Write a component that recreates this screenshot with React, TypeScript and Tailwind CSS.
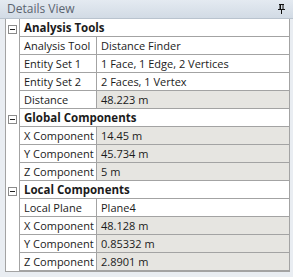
import React from "react";

type Row = { label: string; value: string; readOnly?: boolean };
type Group = { title: string; rows: Row[] };

const groups: Group[] = [
  {
    title: "Analysis Tools",
    rows: [
      { label: "Analysis Tool", value: "Distance Finder" },
      { label: "Entity Set 1", value: "1 Face, 1 Edge, 2 Vertices" },
      { label: "Entity Set 2", value: "2 Faces, 1 Vertex" },
      { label: "Distance", value: "48.223 m", readOnly: true },
    ],
  },
  {
    title: "Global Components",
    rows: [
      { label: "X Component", value: "14.45 m", readOnly: true },
      { label: "Y Component", value: "45.734 m", readOnly: true },
      { label: "Z Component", value: "5 m", readOnly: true },
    ],
  },
  {
    title: "Local Components",
    rows: [
      { label: "Local Plane", value: "Plane4" },
      { label: "X Component", value: "48.128 m", readOnly: true },
      { label: "Y Component", value: "0.85332 m", readOnly: true },
      { label: "Z Component", value: "2.8901 m", readOnly: true },
    ],
  },
];

const PinIcon = () => (
  <svg width="7" height="10" viewBox="0 0 7 10" className="block">
    <path d="M1 0.5h5M2 0.5v5M5 0.5v5M0 5.5h7M3.5 5.5v4.5" stroke="#111" strokeWidth="1" fill="none" />
    <rect x="2" y="1" width="1" height="4" fill="#111" />
  </svg>
);

const MinusBox = () => (
  <div className="w-[9px] h-[9px] border border-[#8b8b8b] bg-white flex items-center justify-center">
    <div className="w-[5px] h-px bg-[#222]" />
  </div>
);

const App = () => {
  return (
    <div
      className="w-[293px] h-[277px] bg-[#e9edf2] overflow-hidden text-[11px] text-[#1b1b1b]"
      style={{ fontFamily: '"Open Sans", "Noto Sans", sans-serif' }}
    >
      <div className="h-[19px] flex items-center justify-between pl-[7px] pr-[8px] bg-gradient-to-b from-[#e4eaf1] to-[#d2dbe5] border-b border-[#b9c3ce]">
        <span className="text-[#5b6470] text-[12px] leading-none">Details View</span>
        <PinIcon />
      </div>
      <div className="ml-[5px] w-[285px] border border-t-0 border-[#a3a3a3] bg-white">
        {groups.map((g) => (
          <div key={g.title} className="flex">
            <div className="w-[14px] shrink-0 border-r border-[#a3a3a3] pt-[6px] pl-[2px]">
              <MinusBox />
            </div>
            <div className="flex-1">
              <div className="h-[18px] border-b border-[#a3a3a3] flex items-center pl-[4px] font-bold leading-none text-[11.5px]">
                {g.title}
              </div>
              {g.rows.map((r) => (
                <div key={r.label} className="h-[18px] border-b border-[#a3a3a3] flex leading-none">
                  <div className="w-[77px] shrink-0 border-r border-[#a3a3a3] flex items-center pl-[4px] whitespace-nowrap">
                    {r.label}
                  </div>
                  <div
                    className={`flex-1 flex items-center pl-[4px] whitespace-nowrap overflow-hidden ${
                      r.readOnly ? "bg-[#e6e5e1]" : "bg-white"
                    }`}
                  >
                    {r.value}
                  </div>
                </div>
              ))}
            </div>
          </div>
        ))}
      </div>
    </div>
  );
};

export default App;
